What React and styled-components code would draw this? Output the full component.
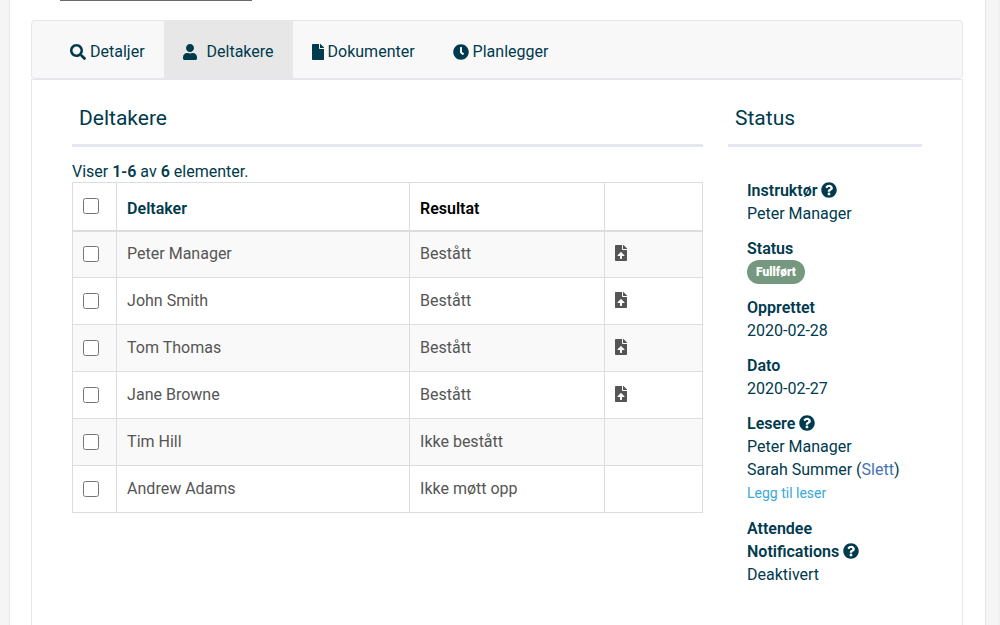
import { FaSearch, FaUser, FaFile, FaClock, FaFileUpload, FaQuestionCircle } from "react-icons/fa";
import styled, { createGlobalStyle } from "styled-components";

const tabs = [
  { label: "Detaljer", icon: FaSearch, iconWidth: 16, gap: 4 },
  { label: "Deltakere", icon: FaUser, iconWidth: 14, gap: 10, active: true },
  { label: "Dokumenter", icon: FaFile, iconWidth: 12, gap: 4 },
  { label: "Planlegger", icon: FaClock, iconWidth: 16, gap: 4 },
]

const attendees = [
  { name: "Peter Manager", result: "Bestått", upload: true },
  { name: "John Smith", result: "Bestått", upload: true },
  { name: "Tom Thomas", result: "Bestått", upload: true },
  { name: "Jane Browne", result: "Bestått", upload: true },
  { name: "Tim Hill", result: "Ikke bestått" },
  { name: "Andrew Adams", result: "Ikke møtt opp" },
]

const App = () => {
  return (
    <Page>
      <GlobalStyle />
      <Frame>
        <TopStrip><TopEdge /></TopStrip>
        <TabBar>
          {tabs.map(({ label, icon: TabIcon, iconWidth, gap, active }) => (
            <Tab href="#" key={label} $active={active} $gap={gap} aria-current={active ? "page" : undefined}>
              <Icon as={TabIcon} $width={iconWidth} />
              {label}
            </Tab>
          ))}
        </TabBar>
        <Panel>
          <section>
            <Heading>Deltakere</Heading>
            <Summary>Viser <b>1-6</b> av <b>6</b> elementer.</Summary>
            <Table>
              <colgroup>
                <Col $width="7%" />
                <Col $width="46.5%" />
                <Col $width="31%" />
                <Col $width="15.5%" />
              </colgroup>
              <thead>
                <tr>
                  <HeadCell $top><Checkbox type="checkbox" aria-label="Velg alle" /></HeadCell>
                  <HeadCell><SortLink href="#">Deltaker</SortLink></HeadCell>
                  <HeadCell>Resultat</HeadCell>
                  <HeadCell />
                </tr>
              </thead>
              <tbody>
                {attendees.map((a) => (
                  <Row key={a.name}>
                    <CheckCell><Checkbox type="checkbox" aria-label={a.name} /></CheckCell>
                    <Cell>{a.name}</Cell>
                    <Cell>{a.result}</Cell>
                    <Cell>
                      {a.upload && (
                        <IconButton type="button" aria-label="Last opp fil">
                          <Icon as={FaFileUpload} $width={12} />
                        </IconButton>
                      )}
                    </Cell>
                  </Row>
                ))}
              </tbody>
            </Table>
          </section>
          <aside>
            <Heading>Status</Heading>
            <Details>
              <Detail>
                <dt>Instruktør <Icon as={FaQuestionCircle} $width={16} /></dt>
                <dd>Peter Manager</dd>
              </Detail>
              <Detail>
                <dt>Status</dt>
                <BadgeLine><Badge>Fullført</Badge></BadgeLine>
              </Detail>
              <Detail>
                <dt>Opprettet</dt>
                <dd>2020-02-28</dd>
              </Detail>
              <Detail>
                <dt>Dato</dt>
                <dd>2020-02-27</dd>
              </Detail>
              <Detail>
                <dt>Lesere <Icon as={FaQuestionCircle} $width={16} /></dt>
                <dd>Peter Manager</dd>
                <dd>Sarah Summer (<RemoveLink href="#">Slett</RemoveLink>)</dd>
                <dd><AddLink href="#">Legg til leser</AddLink></dd>
              </Detail>
              <Detail>
                <dt>Attendee Notifications <Icon as={FaQuestionCircle} $width={16} /></dt>
                <dd>Deaktivert</dd>
              </Detail>
            </Details>
          </aside>
        </Panel>
      </Frame>
    </Page>
  )
}

const GlobalStyle = createGlobalStyle`
  * {
    box-sizing: border-box;
  }
  body {
    margin: 0;
    background: #f5f5f5;
    color: #003a4d;
    font-family: Roboto, sans-serif;
    font-size: 16px;
    line-height: 23px;
  }
  b {
    font-weight: 600;
  }
`
const Page = styled.div`
  display: flex;
  min-height: 100vh;
  padding: 0 12px 0 9px;
  border-right: 2px solid #f1f1f1;
`
const Frame = styled.main`
  display: flex;
  flex-direction: column;
  flex: 1;
  min-width: 0;
  padding: 0 22px 0 21px;
  background: #fff;
  border: 1px solid #e7e7e7;
  border-width: 0 1px;
`
const TopStrip = styled.div`
  display: flex;
  align-items: flex-start;
  height: 20px;
  padding-left: 29px;
`
const TopEdge = styled.div`
  width: 192px;
  height: 1px;
  background: #6a6a6a;
`
const TabBar = styled.nav`
  display: flex;
  padding-left: 19px;
  background: #f8f8f8;
  border: 1px solid #e7e7e7;
  border-radius: 4px;
`
const Tab = styled.a`
  display: flex;
  align-items: center;
  gap: ${(props) => props.$gap}px;
  height: 57px;
  padding: 4px 19px 0;
  color: #003a4d;
  text-decoration: none;
  background: ${(props) => (props.$active ? "#e7e7e7" : "transparent")};
`
const Icon = styled.svg`
  width: ${(props) => props.$width}px;
  height: 16px;
  vertical-align: -2px;
`
const Panel = styled.div`
  display: grid;
  grid-template-columns: minmax(0, 1fr) 194px;
  gap: 25px;
  flex: 1;
  padding: 23px 40px 36px;
  border: 1px solid #e4e7ed;
  border-bottom: 0;
`
const Heading = styled.h2`
  margin: 0;
  padding: 0 7px 11px;
  border-bottom: 3px solid #e4e7ed;
  font-size: 21px;
  font-weight: 400;
  line-height: 30px;
`
const Summary = styled.p`
  margin: 15px 0 0;
  line-height: 20px;
`
const Table = styled.table`
  width: 100%;
  border-collapse: collapse;
  table-layout: fixed;
`
const Col = styled.col`
  width: ${(props) => props.$width};
`
const HeadCell = styled.th`
  height: 48px;
  padding: ${(props) => (props.$top ? "0 10px 1px" : "5px 10px 0")};
  border: 1px solid #ddd;
  border-bottom-width: 2px;
  color: #000;
  font-weight: 600;
  text-align: left;
`
const SortLink = styled.a`
  color: #003a4d;
  text-decoration: none;
`
const Row = styled.tr`
  &:nth-child(odd) {
    background: #f9f9f9;
  }
`
const Cell = styled.td`
  height: 47px;
  padding: 0 10px 1px;
  border: 1px solid #ddd;
  color: #555;
`
const CheckCell = styled(Cell)`
  padding: 0 10px;
`
const Checkbox = styled.input`
  display: block;
  width: 16px;
  height: 16px;
  margin: 0;
`
const IconButton = styled.button`
  display: flex;
  padding: 0 0 2px;
  border: 0;
  background: none;
  color: #555;
`
const Details = styled.dl`
  margin: 32px 0 0;
  padding: 0 19px;
`
const Detail = styled.div`
  margin-bottom: 12px;

  dt {
    font-weight: 600;
  }
  dd {
    margin: 0;
    white-space: nowrap;
  }
`
const BadgeLine = styled.dd`
  display: flex;
`
const Badge = styled.span`
  padding: 0 9px;
  border-radius: 12px;
  background: #769880;
  color: #fff;
  font-size: 12px;
  font-weight: 900;
  line-height: 24px;
`
const RemoveLink = styled.a`
  color: #4472b5;
  text-decoration: none;
`
const AddLink = styled.a`
  color: #3aa9d6;
  font-size: 14px;
  text-decoration: none;
`

export default App
